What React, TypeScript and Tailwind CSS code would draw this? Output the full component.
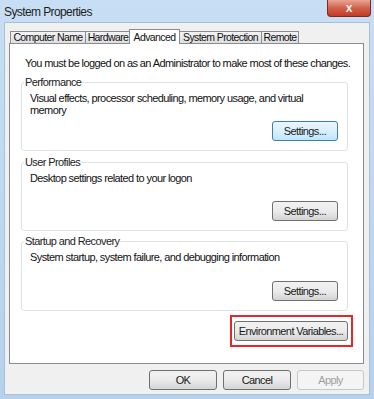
import React from 'react';

const font = { fontFamily: '"Liberation Sans", Arial, sans-serif' };

const tabs = [
  { t: 'Computer Name', w: 'w-[76px]' },
  { t: 'Hardware', w: 'w-[46px]' },
  { t: 'Advanced', w: 'w-[51px]' },
  { t: 'System Protection', w: 'w-[83px]' },
  { t: 'Remote', w: 'w-[38px]' },
];

const txt = 'text-[11px] tracking-[-0.6px] whitespace-nowrap';
const tabTxt = 'text-[10.5px] tracking-[-0.6px] whitespace-nowrap';

function Btn({ label, w = 'w-[66px]', primary = false, disabled = false }: { label: string; w?: string; primary?: boolean; disabled?: boolean }) {
  let cls = 'border-[#707070] bg-gradient-to-b from-[#f2f2f2] via-[#ebebeb] to-[#d4d4d4] text-[#1a1a1a]';
  if (primary) cls = 'border-[#3c7fb1] bg-gradient-to-b from-[#eaf6fd] via-[#d9f0fc] to-[#bee6fd] text-[#1a1a1a]';
  if (disabled) cls = 'border-[#c5c8ca] bg-[#f4f4f4] text-[#a0a0a0]';
  return (
    <div className={`${w} h-[20px] rounded-[3px] border flex items-center justify-center leading-none ${txt} ${cls}`}>
      {label}
    </div>
  );
}

function Group({ title, h, text }: { title: string; h: string; text: React.ReactNode }) {
  return (
    <div className={`relative ${h} border border-[#dde3e8] rounded-[3px] pt-[9px] pb-[9px] pl-[8px] pr-[9px] flex flex-col justify-between`}>
      <span className={`absolute -top-[7px] left-[2px] bg-white px-[1px] leading-[13px] text-[#222] ${txt}`}>{title}</span>
      <div className={`leading-[12px] text-[#111] ${txt}`}>{text}</div>
      <div className="flex justify-end">
        <Btn label="Settings..." primary={title === 'Performance'} />
      </div>
    </div>
  );
}

export default function App() {
  return (
    <div className="w-[374px] h-[399px] bg-gradient-to-b from-[#c8def4] to-[#b6d1ee] flex flex-col overflow-hidden" style={font}>
      <div className="h-[22px] flex items-start shrink-0">
        <div className="pl-[4px] pt-[5px] text-[12px] tracking-[-0.6px] leading-[14px] text-[#1e1e1e] whitespace-nowrap">System Properties</div>
        <div className="ml-auto mr-[3px] w-[44px] h-[17px] rounded-b-[4px] border border-t-0 border-[#7e2a1d] bg-gradient-to-b from-[#e8a493] via-[#d2604b] to-[#c23b24] flex items-center justify-center">
          <span className="text-[#f4eeee] font-bold text-[12px] leading-none">x</span>
        </div>
      </div>
      <div className="mx-[4px] mb-[4px] flex-1 bg-[#f0f0f0] border border-[#a9bfd6] pl-[4px] pr-[5px] pt-[6px] flex flex-col">
        <div className="flex items-end h-[14px] pl-[1px]">
          {tabs.map(({ t, w }) =>
            t === 'Advanced' ? (
              <div key={t} className={`${w} h-[15px] -mx-[1px] bg-white border border-b-0 border-[#898c95] text-[#111] relative z-10 -mb-[1px] flex items-center justify-center leading-none ${tabTxt}`}>
                {t}
              </div>
            ) : (
              <div key={t} className={`${w} h-[12px] bg-gradient-to-b from-[#f3f3f3] to-[#dedede] border border-b-0 border-[#898c95] text-[#111] -mr-[1px] flex items-center justify-center leading-none ${tabTxt}`}>
                {t}
              </div>
            )
          )}
        </div>
        <div className="h-[321px] bg-white border border-[#898c95] pl-[11px] pr-[15px] pt-[12px] flex flex-col">
          <div className={`leading-[14px] text-[#111] pl-[4px] ${txt}`}>You must be logged on as an Administrator to make most of these changes.</div>
          <div className="mt-[12px] flex flex-col">
            <Group
              title="Performance"
              h="h-[69px]"
              text={
                <>
                  Visual effects, processor scheduling, memory usage, and virtual
                  <br />
                  memory
                </>
              }
            />
            <div className="h-[11px]" />
            <Group title="User Profiles" h="h-[69px]" text="Desktop settings related to your logon" />
            <div className="h-[10px]" />
            <Group title="Startup and Recovery" h="h-[70px]" text="System startup, system failure, and debugging information" />
          </div>
          <div className="flex justify-end mt-[4px] -mr-[5px]">
            <div className="border-2 border-[#e8262a] pl-[2px] pr-[3px] pt-[4px] pb-[4px]">
              <Btn label="Environment Variables..." w="w-[114px]" />
            </div>
          </div>
        </div>
        <div className="flex justify-end gap-[6px] mt-[6px]">
          <Btn label="OK" w="w-[68px]" />
          <Btn label="Cancel" w="w-[68px]" />
          <Btn label="Apply" w="w-[67px]" disabled />
        </div>
      </div>
    </div>
  );
}
